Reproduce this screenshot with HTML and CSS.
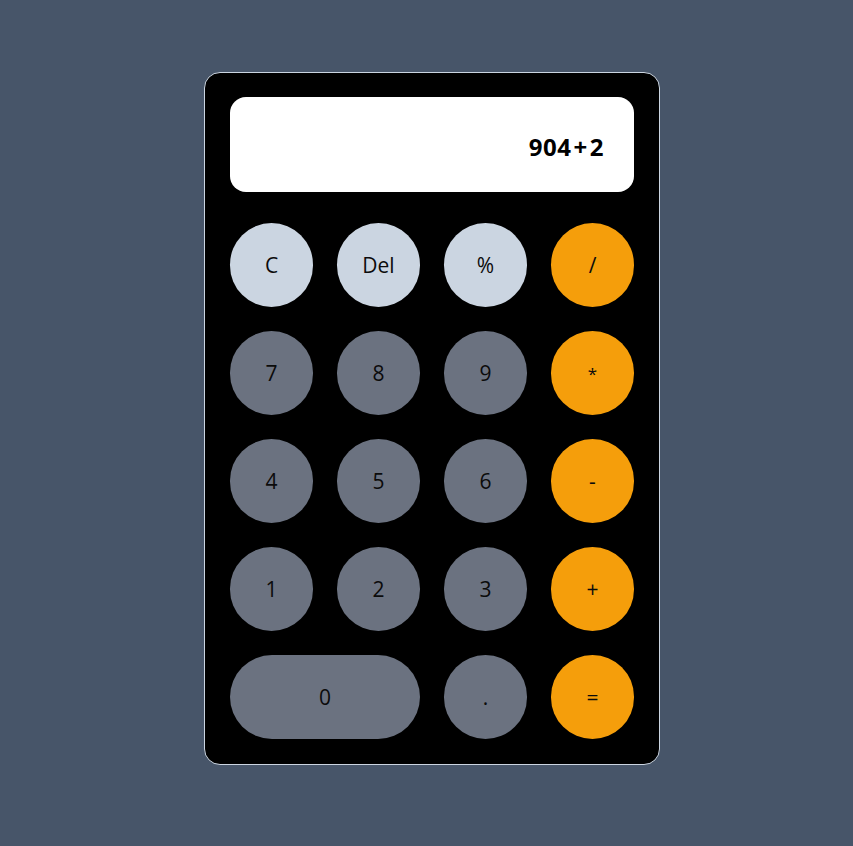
FILE: index.html
```html
<!DOCTYPE html>
<html lang="en">
<head>
<meta charset="utf-8">
<title>Calculator</title>
<link rel="stylesheet" href="styles.css">
</head>
<body>
<div class="page">
  <div class="calc">
    <div class="display"><span class="expr">904<span class="plus">+</span>2</span></div>
    <div class="keys">
      <button class="key light">C</button>
      <button class="key light">Del</button>
      <button class="key light">%</button>
      <button class="key op">/</button>
      <button class="key num">7</button>
      <button class="key num">8</button>
      <button class="key num">9</button>
      <button class="key op"><span class="star">*</span></button>
      <button class="key num">4</button>
      <button class="key num">5</button>
      <button class="key num">6</button>
      <button class="key op">-</button>
      <button class="key num">1</button>
      <button class="key num">2</button>
      <button class="key num">3</button>
      <button class="key op">+</button>
      <button class="key num wide">0</button>
      <button class="key num">.</button>
      <button class="key op">=</button>
    </div>
  </div>
</div>
</body>
</html>
```
FILE: styles.css
```css
html, body {
  margin: 0;
  padding: 0;
  background: #475569;
  font-family: "Open Sans", "Noto Sans", sans-serif;
}
.page {
  min-height: 846px;
  box-sizing: border-box;
  padding: 72px 0 0 204px;
}
.calc {
  width: 456px;
  box-sizing: border-box;
  background: #000;
  border: 1px solid #cbd5e1;
  border-radius: 16px;
  padding: 24px 25px 25px 25px;
}
.display {
  height: 95px;
  background: #fff;
  border-radius: 16px;
  display: flex;
  align-items: center;
  justify-content: flex-end;
  padding: 3px 30px 0 0;
  box-sizing: border-box;
}
.expr {
  font-size: 24px;
  font-weight: 700;
  color: #000;
  letter-spacing: 0.5px;
}
.plus {
  margin: 0 2px;
}
.keys {
  margin-top: 31px;
  display: grid;
  grid-template-columns: repeat(4, 83px);
  grid-auto-rows: 84px;
  column-gap: 24px;
  row-gap: 24px;
}
.key {
  border: none;
  border-radius: 9999px;
  font-family: "Open Sans", "Noto Sans", sans-serif;
  font-size: 21px;
  color: #0b0b0b;
  padding: 0;
  margin: 0;
  display: flex;
  align-items: center;
  justify-content: center;
}
.star {
  font-size: 17px;
}
.light { background: #cbd5e1; }
.num { background: #6b7280; }
.op { background: #f59e0b; }
.wide { grid-column: span 2; }
```
